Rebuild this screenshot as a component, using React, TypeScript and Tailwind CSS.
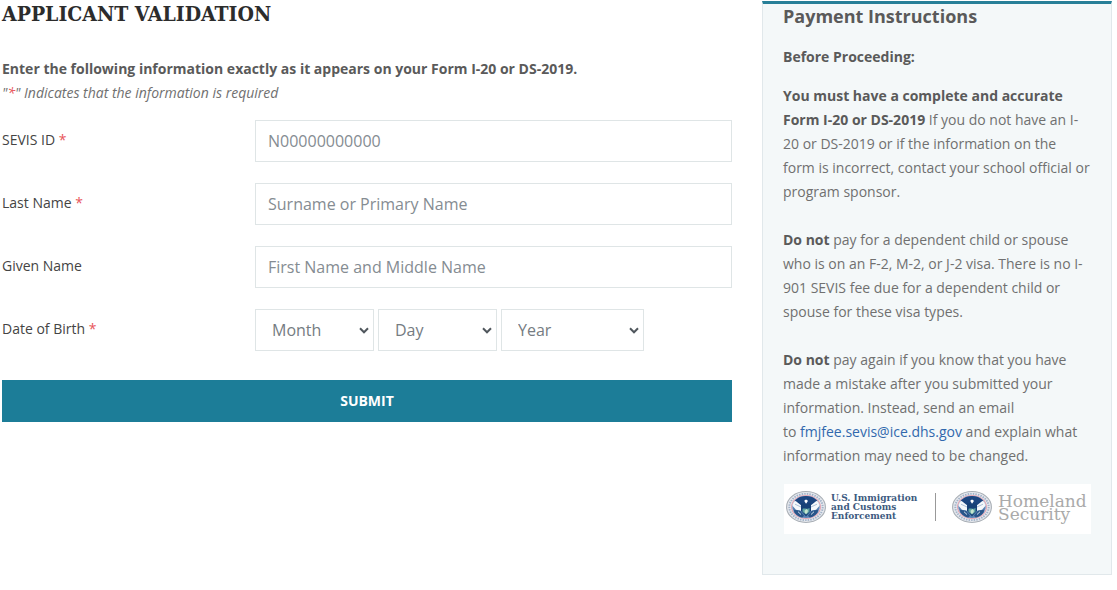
import { useId, type ReactNode } from "react";

function Required() {
  return <span className="text-[#e8555a]">*</span>;
}

function Row({ id, label, required, children }: { id: string; label: string; required?: boolean; children: ReactNode }) {
  return (
    <div className="flex items-center">
      <label htmlFor={id} className="w-[253px] shrink-0 pb-0.5 text-sm text-[#444]">
        {label} {required && <Required />}
      </label>
      <div className="flex min-w-0 flex-1 gap-1">{children}</div>
    </div>
  );
}

const inputClass =
  "h-[42px] w-full min-w-0 border border-[#dfe5e6] bg-white px-3 text-base text-[#6c757d] placeholder:text-[#858c92]";

function Dropdown({ id, label, className }: { id: string; label: string; className: string }) {
  return (
    <div className={`relative ${className}`}>
      <select
        id={id}
        aria-label={label}
        className="h-[42px] w-full appearance-none border border-[#dfe5e6] bg-white pr-6 pl-4 text-base text-[#757c82]"
      >
        <option>{label}</option>
      </select>
      <svg
        viewBox="0 0 10 7"
        className="pointer-events-none absolute top-[18px] right-[5px] h-[7px] w-2.5"
        fill="none"
        stroke="#50575d"
        strokeWidth="2"
        aria-hidden="true"
      >
        <path d="M1 1.300l4 4 4-4" />
      </svg>
    </div>
  );
}

function Seal({ className }: { className: string }) {
  const id = useId();
  return (
    <svg viewBox="0 0 40 34" preserveAspectRatio="none" className={className} role="img" aria-label="Department of Homeland Security seal">
      <defs>
        <clipPath id={id}>
          <ellipse cx="20" cy="17" rx="13.6" ry="11.6" />
        </clipPath>
      </defs>
      <ellipse cx="20" cy="17" rx="19.4" ry="16.4" fill="#e6e9ee" stroke="#a9afb6" strokeWidth="1.1" />
      <ellipse cx="20" cy="17" rx="16.700" ry="14" fill="none" stroke="#a3b3c9" strokeWidth="2" strokeDasharray="1.5 1.1" />
      <ellipse cx="20" cy="17" rx="14.4" ry="12.2" fill="#dce5f0" stroke="#e3a5b2" strokeWidth="1.1" />
      <g clipPath={`url(#${id})`}>
        <path d="M6 5h28v24H6z" fill="#5a83b5" />
        <path d="M9 4h22l2 6-8 7H15l-8-7z" fill="#1c4680" />
        <path d="M5 9l5 2 6 5-1 5-5-1-5-6zM35 9l-5 2-6 5 1 5 5-1 5-6z" fill="#f5f8fb" />
        <path d="M9 14l6 3M31 14l-6 3" stroke="#7797bd" strokeWidth=".6" />
        <path d="M15 13h10v8l-5 6-5-6z" fill="#174177" />
        <path d="M16.500 19c2-1 4 1 7-1v4L20 25l-3.500-3z" fill="#63a7a5" />
        <path d="M18.500 21l2-2 1.500 2-1 3h-2z" fill="#c7e4cf" />
        <path d="M18.300 10.500c.5-1.700 3.200-1.700 3.500.3L20 13.500z" fill="#fff" />
        <path d="M8 20l6 1 4 5-2 3H9zM32 20l-6 1-4 5 2 3h7z" fill="#295589" />
        <path d="M12 22l3 3M28 22l-3 3" stroke="#d5e2ed" strokeWidth="1" />
      </g>
    </svg>
  );
}

export default function App() {
  return (
    <div className="flex items-start gap-[30px] bg-white pr-[5px] pb-4 pl-0.5 font-['Open_Sans','Noto_Sans',sans-serif] text-sm leading-6 text-[#707070]">
      <main className="min-w-0 flex-1">
        <h1 className="font-['Roboto_Slab','DejaVu_Serif_Condensed','DejaVu_Serif',serif] text-[21px] leading-7 font-semibold text-[#2c2c2c]">
          APPLICANT VALIDATION
        </h1>
        <p className="mt-[29px] font-bold text-[#5a5a5a]">
          Enter the following information exactly as it appears on your Form I-20 or DS-2019.
        </p>
        <p className="italic">
          "<Required />" Indicates that the information is required
        </p>
        <form className="mt-[15px]" onSubmit={(e) => e.preventDefault()}>
          <div className="flex flex-col gap-[21px]">
            <Row id="sevis" label="SEVIS ID" required>
              <input id="sevis" type="text" placeholder="N00000000000" className={inputClass} />
            </Row>
            <Row id="last" label="Last Name" required>
              <input id="last" type="text" placeholder="Surname or Primary Name" className={inputClass} />
            </Row>
            <Row id="given" label="Given Name">
              <input id="given" type="text" placeholder="First Name and Middle Name" className={inputClass} />
            </Row>
            <Row id="month" label="Date of Birth" required>
              <Dropdown id="month" label="Month" className="w-[119px]" />
              <Dropdown id="day" label="Day" className="w-[119px]" />
              <Dropdown id="year" label="Year" className="w-[143px]" />
            </Row>
          </div>
          <button type="submit" className="mt-[29px] h-[42px] w-full bg-[#1c7d98] text-sm font-bold text-white">
            SUBMIT
          </button>
        </form>
      </main>
      <aside className="mt-px w-[350px] shrink-0 border border-t-[3px] border-[#e1e8eb] border-t-[#277f98] bg-[#f4f8f9] px-5 pb-10">
        <h2 className="text-lg leading-6 font-bold text-[#5a5a5a]">Payment Instructions</h2>
        <h3 className="mt-[17px] font-bold text-[#5a5a5a]">Before Proceeding:</h3>
        <p className="mt-[15px]">
          <strong className="text-[#5a5a5a]">You must have a complete and accurate Form I-20 or DS-2019</strong> If you do
          not have an I-20 or DS-2019 or if the information on the form is incorrect, contact your school official or
          program sponsor.
        </p>
        <p className="mt-6">
          <strong className="text-[#5a5a5a]">Do not</strong> pay for a dependent child or spouse who is on an F-2, M-2, or
          J-2 visa. There is no I-901 SEVIS fee due for a dependent child or spouse for these visa types.
        </p>
        <p className="mt-6">
          <strong className="text-[#5a5a5a]">Do not</strong> pay again if you know that you have made a mistake after you
          submitted your information. Instead, send an email to&nbsp;
          <a href="mailto:fmjfee.sevis@ice.dhs.gov" className="text-[#3168ad]">
            fmjfee.sevis@ice.dhs.gov
          </a>{" "}
          and explain what information may need to be changed.
        </p>
        <div className="mt-4 ml-px flex h-[50px] items-center bg-white pb-1 pl-0.5 font-['DejaVu_Serif',serif] whitespace-nowrap">
          <Seal className="h-8 w-10" />
          <p className="ml-[5px] w-[104px] text-[9px] leading-[9px] font-bold text-[#3d5a80]">
            U.S. Immigration
            <br />
            and Customs
            <br />
            Enforcement
          </p>
          <div className="h-7 w-px bg-[#999]" />
          <Seal className="ml-4 h-8 w-10" />
          <p className="ml-1.5 pt-0.5 text-[17px] leading-[13px] text-[#aaa]">
            Homeland
            <br />
            Security
          </p>
        </div>
      </aside>
    </div>
  );
}
